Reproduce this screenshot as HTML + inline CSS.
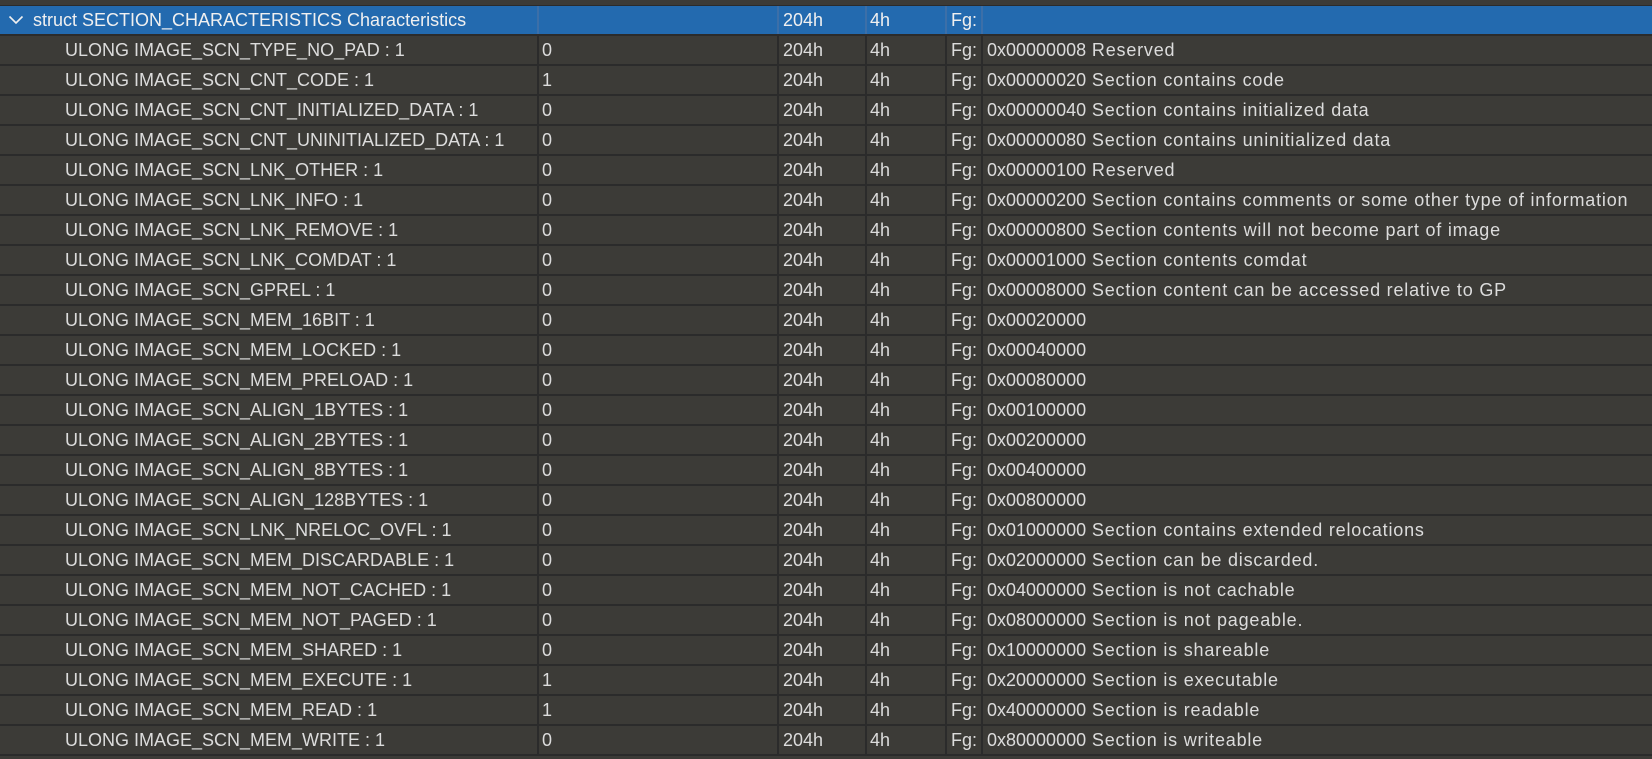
<!DOCTYPE html><html><head><style>
body{margin:0;width:1652px;height:759px;background:#3c3b37;overflow:hidden;font-family:"Liberation Sans",sans-serif;font-size:18px;color:#dcdcdc;position:relative}
.r{position:absolute;left:0;width:1652px;height:30px;border-bottom:2px solid #2b2b2b;box-sizing:border-box}
.c{position:absolute;top:0;height:28px;line-height:28px;white-space:nowrap}
.v{position:absolute;top:0;width:2px;height:28px;background:#2b2b2b}
.sel{background:#236aaf;color:#f0f0f0}
.d{letter-spacing:0.8px}
</style></head><body>
<div style="position:absolute;top:0;left:0;width:1652px;height:5px;border-bottom:1px solid #2b2b2b"></div>
<div id="rows"></div>
<script>
var rows=[["struct SECTION_CHARACTERISTICS Characteristics","",""],
["TYPE_NO_PAD","0","0x00000008 Reserved"],
["CNT_CODE","1","0x00000020 Section contains code"],
["CNT_INITIALIZED_DATA","0","0x00000040 Section contains initialized data"],
["CNT_UNINITIALIZED_DATA","0","0x00000080 Section contains uninitialized data"],
["LNK_OTHER","0","0x00000100 Reserved"],
["LNK_INFO","0","0x00000200 Section contains comments or some other type of information"],
["LNK_REMOVE","0","0x00000800 Section contents will not become part of image"],
["LNK_COMDAT","0","0x00001000 Section contents comdat"],
["GPREL","0","0x00008000 Section content can be accessed relative to GP"],
["MEM_16BIT","0","0x00020000"],
["MEM_LOCKED","0","0x00040000"],
["MEM_PRELOAD","0","0x00080000"],
["ALIGN_1BYTES","0","0x00100000"],
["ALIGN_2BYTES","0","0x00200000"],
["ALIGN_8BYTES","0","0x00400000"],
["ALIGN_128BYTES","0","0x00800000"],
["LNK_NRELOC_OVFL","0","0x01000000 Section contains extended relocations"],
["MEM_DISCARDABLE","0","0x02000000 Section can be discarded."],
["MEM_NOT_CACHED","0","0x04000000 Section is not cachable"],
["MEM_NOT_PAGED","0","0x08000000 Section is not pageable."],
["MEM_SHARED","0","0x10000000 Section is shareable"],
["MEM_EXECUTE","1","0x20000000 Section is executable"],
["MEM_READ","1","0x40000000 Section is readable"],
["MEM_WRITE","0","0x80000000 Section is writeable"]];
var h="";
rows.forEach(function(r,i){
var top=6+30*i,s=i==0;
h+='<div class="r'+(s?' sel':'')+'" style="top:'+top+'px">';
if(s){h+='<svg style="position:absolute;left:8px;top:9px" width="16" height="11"><path d="M1.5 1.5 L8 8 L14.5 1.5" stroke="#f0f0f0" stroke-width="1.6" fill="none"/></svg>';
h+='<div class="c" style="left:33px">'+r[0]+'</div>';}
else h+='<div class="c" style="left:65px">ULONG IMAGE_SCN_'+r[0]+' : 1</div>';
var hex=r[2].slice(0,10),rest=r[2].slice(10);
h+='<div class="c" style="left:542px">'+r[1]+'</div><div class="c" style="left:783px">204h</div><div class="c" style="left:870px">4h</div><div class="c" style="left:951px">Fg:</div><div class="c" style="left:987px">'+hex+'<span class="d">'+rest+'</span></div>';
[537,777,865,945,981].forEach(function(x){h+='<div class="v" style="left:'+x+'px;'+(s?'background:#3c6fa8;':'')+'"></div>'});
h+='</div>';});
document.getElementById("rows").innerHTML=h;
</script>
</body></html>
